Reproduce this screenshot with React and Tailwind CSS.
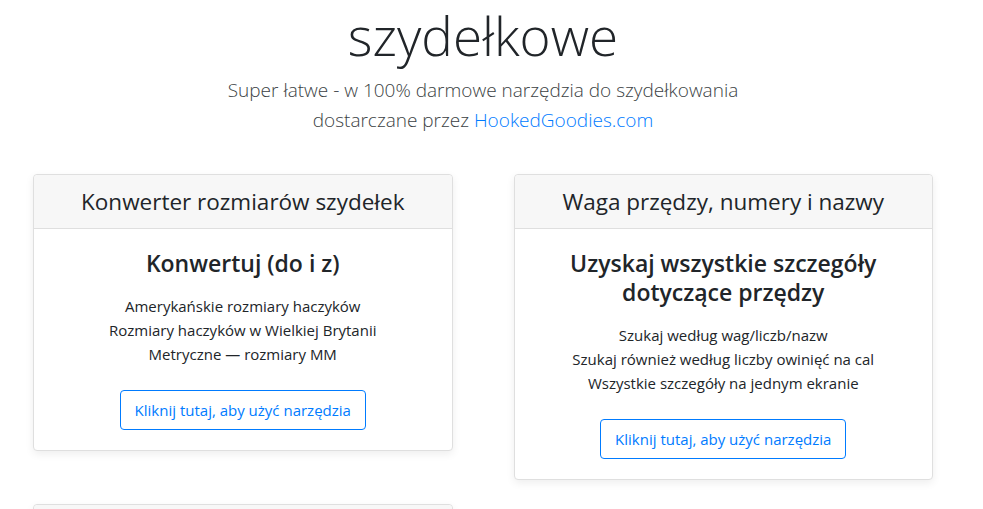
import React from "react";

const tools = [
  {
    header: "Konwerter rozmiarów szydełek",
    title: ["Konwertuj (do i z)"],
    items: [
      "Amerykańskie rozmiary haczyków",
      "Rozmiary haczyków w Wielkiej Brytanii",
      "Metryczne — rozmiary MM",
    ],
  },
  {
    header: "Waga przędzy, numery i nazwy",
    title: ["Uzyskaj wszystkie szczegóły", "dotyczące przędzy"],
    items: [
      "Szukaj według wag/liczb/nazw",
      "Szukaj również według liczby owinięć na cal",
      "Wszystkie szczegóły na jednym ekranie",
    ],
  },
  {
    header: "Wzory i schematy",
    title: ["Więcej narzędzi"],
    items: ["Wkrótce dostępne"],
  },
];

const ToolCard = ({ tool }) => (
  <div className="bg-white border border-[#dfdfdf] rounded-[4px] shadow-[0_3px_8px_rgba(0,0,0,0.07)] text-center">
    <div className="h-[54px] bg-[#f7f7f7] border-b border-[#dfdfdf] rounded-t-[4px] flex items-center justify-center">
      <h4 className="text-[22.5px] text-[#212529] leading-[29px]">{tool.header}</h4>
    </div>
    <div className="px-5 pt-5 pb-5 flex flex-col items-center">
      <h2 className="text-[23px] font-semibold leading-[29px] text-[#212529]">
        {tool.title.map((t) => (
          <div key={t}>{t}</div>
        ))}
      </h2>
      <ul className="mt-4 mb-6 text-[15px] leading-6 text-[#212529]">
        {tool.items.map((it) => (
          <li key={it}>{it}</li>
        ))}
      </ul>
      <button className="h-10 px-[14px] border border-[#007bff] rounded-[4px] text-[15px] text-[#007bff] hover:bg-[#007bff] hover:text-white transition">
        Kliknij tutaj, aby użyć narzędzia
      </button>
    </div>
  </div>
);

export default function App() {
  return (
    <div className="min-h-screen bg-white font-['Open_Sans',sans-serif]">
      <div className="w-[966px]">
        <div className="text-center pt-[3px]">
          <h1 className="text-[53px] font-light leading-[66px] text-[#212529]">szydełkowe</h1>
          <p className="mt-[6px] text-[19px] font-light leading-[30px] text-[#3b3f44]">
            Super łatwe - w 100% darmowe narzędzia do szydełkowania
            <br />
            dostarczane przez <a href="#" className="text-[#007bff]">HookedGoodies.com</a>
          </p>
        </div>
        <div className="mt-[39px] px-[33px] grid grid-cols-2 gap-x-[61px] gap-y-[24px] items-start">
          {tools.map((t) => (
            <ToolCard key={t.header} tool={t} />
          ))}
        </div>
      </div>
    </div>
  );
}
